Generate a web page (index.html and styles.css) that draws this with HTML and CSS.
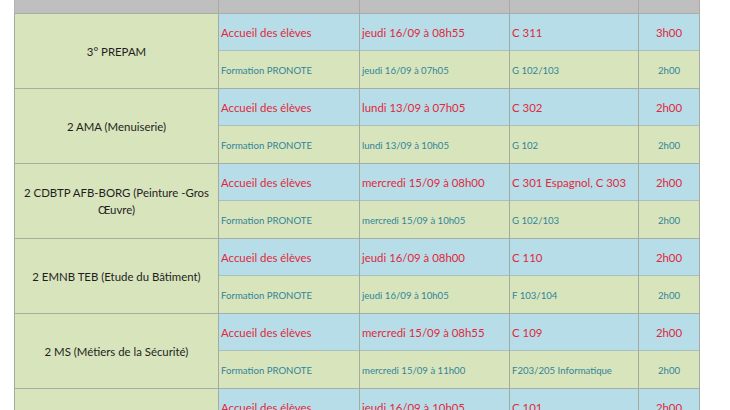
FILE: index.html
```html
<!DOCTYPE html>
<html lang="fr">
<head>
<meta charset="utf-8">
<link rel="stylesheet" href="styles.css">
</head>
<body>
<table class="sheet">
  <colgroup>
    <col class="c-class"><col class="c-act"><col class="c-date"><col class="c-room"><col class="c-dur">
  </colgroup>
  <tr class="head"><td></td><td></td><td></td><td></td><td></td></tr>

  <tr class="r-accueil">
    <td class="name" rowspan="2">3° PREPAM</td>
    <td>Accueil des élèves</td><td>jeudi 16/09 à 08h55</td><td>C 311</td><td class="dur">3h00</td>
  </tr>
  <tr class="r-form">
    <td>Formation PRONOTE</td><td>jeudi 16/09 à 07h05</td><td>G 102/103</td><td class="dur">2h00</td>
  </tr>

  <tr class="r-accueil">
    <td class="name" rowspan="2">2 AMA (Menuiserie)</td>
    <td>Accueil des élèves</td><td>lundi 13/09 à 07h05</td><td>C 302</td><td class="dur">2h00</td>
  </tr>
  <tr class="r-form">
    <td>Formation PRONOTE</td><td>lundi 13/09 à 10h05</td><td>G 102</td><td class="dur">2h00</td>
  </tr>

  <tr class="r-accueil">
    <td class="name" rowspan="2">2 CDBTP AFB-BORG (Peinture -Gros Œuvre)</td>
    <td>Accueil des élèves</td><td>mercredi 15/09 à 08h00</td><td>C 301 Espagnol, C 303</td><td class="dur">2h00</td>
  </tr>
  <tr class="r-form">
    <td>Formation PRONOTE</td><td>mercredi 15/09 à 10h05</td><td>G 102/103</td><td class="dur">2h00</td>
  </tr>

  <tr class="r-accueil">
    <td class="name" rowspan="2">2 EMNB TEB (Etude du Bâtiment)</td>
    <td>Accueil des élèves</td><td>jeudi 16/09 à 08h00</td><td>C 110</td><td class="dur">2h00</td>
  </tr>
  <tr class="r-form">
    <td>Formation PRONOTE</td><td>jeudi 16/09 à 10h05</td><td>F 103/104</td><td class="dur">2h00</td>
  </tr>

  <tr class="r-accueil">
    <td class="name" rowspan="2">2 MS (Métiers de la Sécurité)</td>
    <td>Accueil des élèves</td><td>mercredi 15/09 à 08h55</td><td>C 109</td><td class="dur">2h00</td>
  </tr>
  <tr class="r-form">
    <td>Formation PRONOTE</td><td>mercredi 15/09 à 11h00</td><td>F203/205  Informatique</td><td class="dur">2h00</td>
  </tr>

  <tr class="r-accueil">
    <td class="name" rowspan="2"></td>
    <td>Accueil des élèves</td><td>jeudi 16/09 à 10h05</td><td>C 101</td><td class="dur">2h00</td>
  </tr>
</table>
</body>
</html>
```
FILE: styles.css
```css
html, body {
  margin: 0;
  padding: 0;
  background: #ffffff;
  overflow: hidden;
}

body {
  padding-left: 14px;
  font-family: Lato, "Open Sans", "Liberation Sans", sans-serif;
}

.sheet {
  border-collapse: collapse;
  table-layout: fixed;
  width: 685px;
}

.c-class { width: 204px; }
.c-act { width: 141px; }
.c-date { width: 150px; }
.c-room { width: 129px; }
.c-dur { width: 61px; }

.sheet td {
  padding: 1px 2px 0;
  border-left: 1px solid #a3aaa0;
  border-right: 1px solid #a3aaa0;
  white-space: nowrap;
  overflow: hidden;
  vertical-align: middle;
}

.head td {
  height: 13px;
  padding: 0;
  background: #bfbfbf;
  border-top: none;
  border-bottom: 1px solid #a8ada6;
  border-left-color: #b3b3b3;
  border-right-color: #a9a9a9;
}

.r-accueil td {
  height: 35px;
  background: #b7dde8;
  color: #e0283c;
  font-size: 11.4px;
  border-top: 1px solid #a6ada4;
}

.r-form td {
  height: 36px;
  background: #d8e4bc;
  color: #31849b;
  font-size: 9.6px;
  border-top: 1px solid #a9c0c2;
}

.sheet td.name {
  background: #d8e4bc;
  color: #1e1e1e;
  font-size: 11.4px;
  text-align: center;
  white-space: normal;
  padding: 0 6px;
  line-height: 17px;
}

.sheet td.dur {
  text-align: center;
}
```
